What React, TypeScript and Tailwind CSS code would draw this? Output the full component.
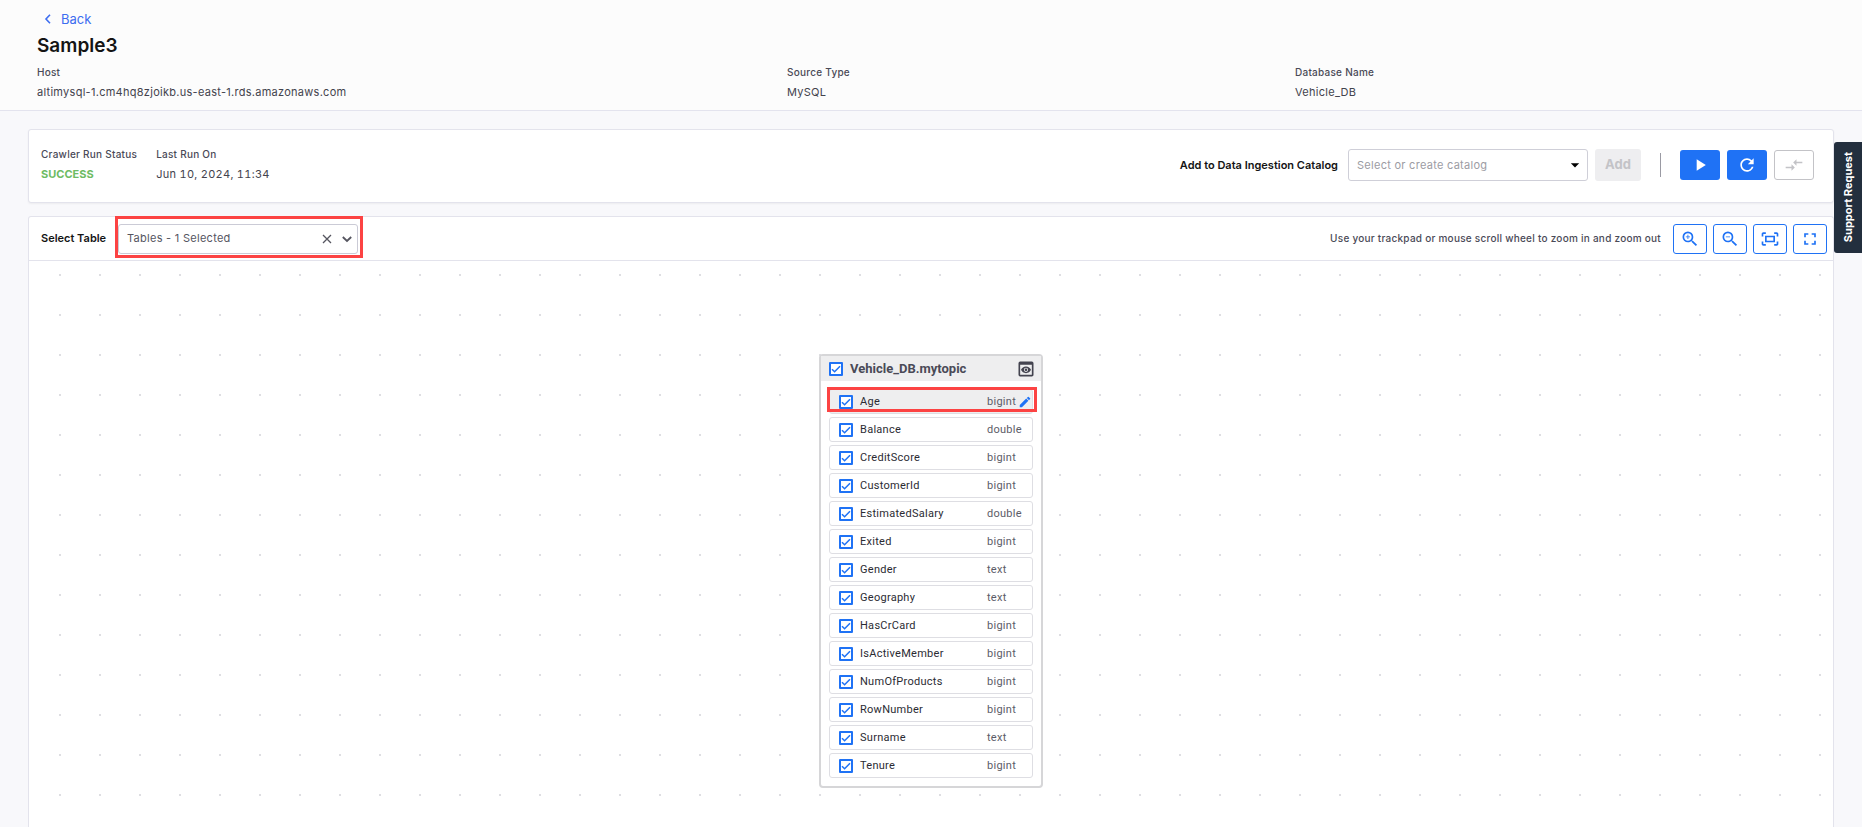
import { useState } from 'react'
import {
  MdArrowDropDown,
  MdCompareArrows,
  MdEdit,
  MdFullscreen,
  MdOutlineFitScreen,
  MdPlayArrow,
  MdPreview,
  MdRefresh,
  MdZoomIn,
  MdZoomOut,
} from 'react-icons/md'

const columns = [
  { name: 'Age', type: 'bigint' },
  { name: 'Balance', type: 'double' },
  { name: 'CreditScore', type: 'bigint' },
  { name: 'CustomerId', type: 'bigint' },
  { name: 'EstimatedSalary', type: 'double' },
  { name: 'Exited', type: 'bigint' },
  { name: 'Gender', type: 'text' },
  { name: 'Geography', type: 'text' },
  { name: 'HasCrCard', type: 'bigint' },
  { name: 'IsActiveMember', type: 'bigint' },
  { name: 'NumOfProducts', type: 'bigint' },
  { name: 'RowNumber', type: 'bigint' },
  { name: 'Surname', type: 'text' },
  { name: 'Tenure', type: 'bigint' },
]

const tools = [
  { label: 'Zoom in', Icon: MdZoomIn },
  { label: 'Zoom out', Icon: MdZoomOut },
  { label: 'Fit to screen', Icon: MdOutlineFitScreen },
  { label: 'Fullscreen', Icon: MdFullscreen },
]

const valueTone = {
  plain: 'tracking-wide text-[#43434d]',
  date: 'tracking-wide tabular-nums text-[#43434d]',
  success: 'font-bold text-[#6dbb63]',
}

function Field({ label, value, tone = 'plain' }: { label: string; value: string; tone?: keyof typeof valueTone }) {
  return (
    <div>
      <dt className="text-[10px] leading-4 font-medium tracking-wide text-[#4a4a57]">{label}</dt>
      <dd className={`mt-1 text-[11px] leading-4 ${valueTone[tone]}`}>{value}</dd>
    </div>
  )
}

function Checkbox({ id, label }: { id?: string; label?: string }) {
  const [checked, setChecked] = useState(true)
  return (
    <span className="grid size-3.5 shrink-0">
      <input
        id={id}
        type="checkbox"
        aria-label={label}
        checked={checked}
        onChange={(e) => setChecked(e.target.checked)}
        className="peer col-start-1 row-start-1 size-3.5 appearance-none rounded-[1px] border-2 border-[#1f72f5] bg-white"
      />
      <svg
        viewBox="0 0 14 14"
        className="pointer-events-none invisible col-start-1 row-start-1 size-3.5 fill-none stroke-[#1f72f5] stroke-[1.5] peer-checked:visible"
      >
        <path d="M3 7.2 5.6 9.8 11 4.2" />
      </svg>
    </span>
  )
}

function TableNode() {
  return (
    <section className="w-56 rounded-[4px] border-2 border-[#d6d6d8] bg-white pb-2 font-['Roboto',sans-serif]">
      <header className="flex h-[25px] items-center bg-[#eeeeef] pr-[5px] pl-2">
        <Checkbox label="Vehicle_DB.mytopic" />
        <h2 className="ml-[7px] flex-1 text-[13px] leading-4 font-bold text-[#4a4a57]">Vehicle_DB.mytopic</h2>
        <button type="button" aria-label="Preview" className="text-[#43434f]">
          <MdPreview size={20} />
        </button>
      </header>
      <ul className="mt-2 flex flex-col gap-[3px] px-2">
        {columns.map((col, i) => (
          <li
            key={col.name}
            className={`relative flex h-[25px] items-center rounded-[3px] border border-[#dedee3] pl-[9px] ${
              i === 0 ? 'bg-[#eeeeef]' : 'bg-white'
            }`}
          >
            <Checkbox id={`col-${col.name}`} />
            <label
              htmlFor={`col-${col.name}`}
              className="ml-[7px] w-[127px] shrink-0 text-[11px] leading-[15px] tracking-wide text-[#2b2b33]"
            >
              {col.name}
            </label>
            <span className="text-[11px] leading-[15px] tracking-wide text-[#5c5c68]">{col.type}</span>
            {i === 0 && (
              <>
                <button type="button" aria-label="Edit Age" className="ml-0.5 shrink-0 text-[#1f72f5]">
                  <MdEdit size={14} />
                </button>
                <span className="pointer-events-none absolute -top-[3px] -right-[5px] bottom-px -left-[3px] border-3 border-[#fc4343]" />
              </>
            )}
          </li>
        ))}
      </ul>
    </section>
  )
}

export default function App() {
  return (
    <div className="flex min-h-screen flex-col bg-[#f8f8fb] font-['Inter',sans-serif]">
      <header className="border-b border-[#e3e3ee] bg-[#fcfcfc] px-[37px] pt-[9px] pb-2.5">
        <a href="#back" className="flex items-center gap-[9px] pl-[7px] text-[13px] leading-5 text-[#3d6df0]">
          <svg viewBox="0 0 8 10" className="h-2.5 w-2 fill-none stroke-current stroke-[1.6]">
            <path d="M6 .8 2 5l4 4.2" />
          </svg>
          Back
        </a>
        <h1 className="mt-[5px] text-[19px] leading-6 font-semibold text-[#141414]">Sample3</h1>
        <dl className="mt-1.5 grid grid-cols-[750fr_508fr_530fr]">
          <Field label="Host" value="altimysql-1.cm4hq8zjoikb.us-east-1.rds.amazonaws.com" />
          <Field label="Source Type" value="MySQL" />
          <Field label="Database Name" value="Vehicle_DB" />
        </dl>
      </header>

      <main className="flex flex-1 flex-col gap-[13px] px-7 pt-[18px]">
        <section className="flex items-start justify-between rounded-[3px] border border-[#e3e3ec] bg-white px-3 pt-4 pb-5 shadow-xs">
          <dl className="flex gap-[19px]">
            <Field label="Crawler Run Status" value="SUCCESS" tone="success" />
            <Field label="Last Run On" value="Jun 10, 2024, 11:34" tone="date" />
          </dl>
          <div className="mt-[3px] mr-[7px] flex items-center">
            <label htmlFor="catalog" className="mr-2.5 text-[11px] font-semibold text-[#141414]">
              Add to Data Ingestion Catalog
            </label>
            <div className="flex h-8 w-60 items-center rounded-[3px] border border-[#cfcfd8] pr-0.5 pl-2">
              <input
                id="catalog"
                placeholder="Select or create catalog"
                className="min-w-0 flex-1 text-[11px] tracking-wide outline-none placeholder:text-[#9c9ca3]"
              />
              <MdArrowDropDown size={20} />
            </div>
            <button
              type="button"
              disabled
              className="ml-[7px] h-8 w-[46px] rounded-[3px] bg-[#eeeef0] text-[13px] font-bold text-[#c3c3c7]"
            >
              Add
            </button>
            <span className="mx-[19px] h-6 w-px bg-[#9a9aa3]" />
            <div className="flex gap-[7px]">
              <button
                type="button"
                aria-label="Run"
                className="grid h-[30px] w-10 place-items-center rounded-[3px] bg-[#1f72f5] text-white"
              >
                <MdPlayArrow size={20} />
              </button>
              <button
                type="button"
                aria-label="Refresh"
                className="grid h-[30px] w-10 place-items-center rounded-[3px] bg-[#1f72f5] text-white"
              >
                <MdRefresh size={20} />
              </button>
              <button
                type="button"
                aria-label="Compare"
                disabled
                className="grid h-[30px] w-10 place-items-center rounded-[3px] border border-[#c3c3c7] text-[#c3c3c7]"
              >
                <MdCompareArrows size={20} />
              </button>
            </div>
          </div>
        </section>

        <section className="flex flex-1 flex-col rounded-t-[3px] border border-b-0 border-[#e3e3ec] bg-white">
          <div className="flex h-[44px] items-center border-b border-[#e3e3ec] pr-1.5 pl-3">
            <span className="w-[77px] text-[11px] font-semibold text-[#141414]">Select Table</span>
            <div className="relative flex h-[30px] w-60 items-center rounded-[3px] border border-[#cbcbd6] pl-2 text-[#55555f]">
              <button type="button" className="flex-1 text-left text-[11px] tracking-wide">
                Tables - 1 Selected
              </button>
              <button type="button" aria-label="Clear" className="grid size-5 place-items-center">
                <svg viewBox="0 0 10 10" className="size-2.5 fill-none stroke-current stroke-[1.3]">
                  <path d="m1 1 8 8M9 1 1 9" />
                </svg>
              </button>
              <button type="button" aria-label="Open" className="grid size-5 place-items-center">
                <svg viewBox="0 0 10 10" className="size-2.5 fill-none stroke-current stroke-[1.8]">
                  <path d="m.8 3 4.2 4 4.2-4" />
                </svg>
              </button>
              <span className="pointer-events-none absolute -top-[9px] -right-1.5 -bottom-[5px] -left-1 border-3 border-[#fc4343]" />
            </div>
            <p className="ml-auto text-[10px] font-medium tracking-wide text-[#4a4a57]">
              Use your trackpad or mouse scroll wheel to zoom in and zoom out
            </p>
            <div className="ml-3 flex gap-1.5">
              {tools.map(({ label, Icon }) => (
                <button
                  key={label}
                  type="button"
                  aria-label={label}
                  className="grid h-[30px] w-[34px] place-items-center rounded-[3px] border border-[#1f72f5] text-[#1f72f5]"
                >
                  <Icon size={20} />
                </button>
              ))}
            </div>
          </div>
          <div className="flex flex-1 items-start justify-center bg-[radial-gradient(circle_at_center,#dedee2_1px,transparent_1px)] bg-size-[40px_40px] bg-position-[11px_-6px] pt-[93px]">
            <TableNode />
          </div>
        </section>
      </main>

      <button
        type="button"
        className="fixed top-[142px] right-0 flex h-[111px] w-7 items-center justify-center rounded-l-[3px] bg-[#232f3e] text-white"
      >
        <span className="rotate-180 text-[11px] font-bold [writing-mode:vertical-rl]">Support Request</span>
      </button>
    </div>
  )
}
